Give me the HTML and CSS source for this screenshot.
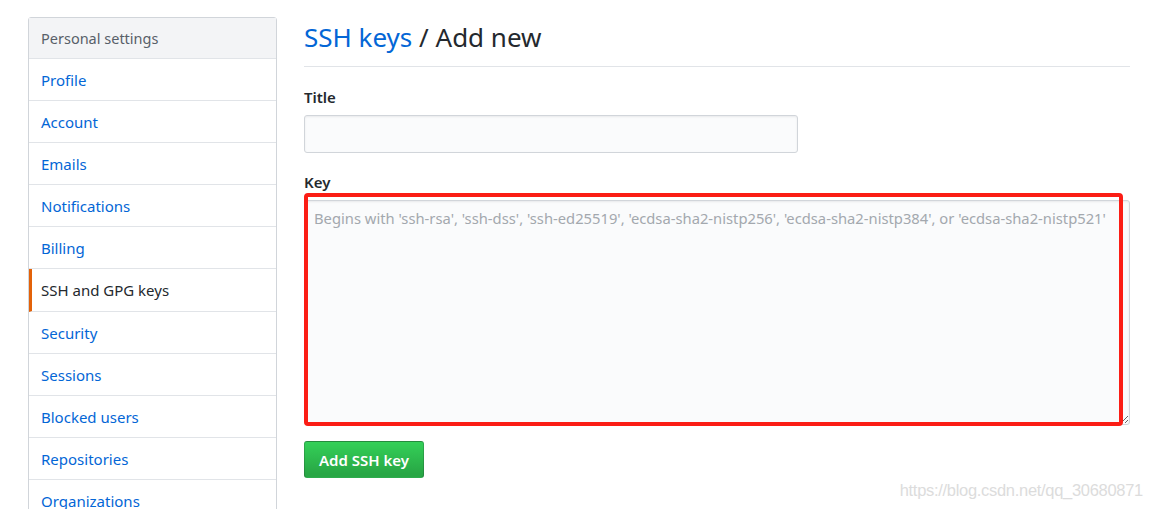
FILE: index.html
```html
<!DOCTYPE html>
<html lang="en">
<head>
  <meta charset="UTF-8" />
  <title>SSH keys / Add new</title>
  <link rel="stylesheet" href="styles.css">
</head>
<body>

<div class="page">
  <nav class="menu">
    <div class="menu-heading">Personal settings</div>
    <a class="menu-item" href="#">Profile</a>
    <a class="menu-item" href="#">Account</a>
    <a class="menu-item" href="#">Emails</a>
    <a class="menu-item" href="#">Notifications</a>
    <a class="menu-item" href="#">Billing</a>
    <a class="menu-item selected" href="#">SSH and GPG keys</a>
    <a class="menu-item" href="#">Security</a>
    <a class="menu-item" href="#">Sessions</a>
    <a class="menu-item" href="#">Blocked users</a>
    <a class="menu-item" href="#">Repositories</a>
    <a class="menu-item" href="#">Organizations</a>
  </nav>

  <main class="main">
    <div class="subhead">
      <h2><a href="#">SSH keys</a> / Add new</h2>
    </div>

    <form>
      <label class="field-label" for="title">Title</label>
      <input class="form-control title-input" type="text" id="title" />

      <label class="field-label key-label" for="key">Key</label>
      <div class="key-wrap">
        <textarea class="form-control key-input" id="key" placeholder="Begins with 'ssh-rsa', 'ssh-dss', 'ssh-ed25519', 'ecdsa-sha2-nistp256', 'ecdsa-sha2-nistp384', or 'ecdsa-sha2-nistp521'"></textarea>
        <div class="highlight"></div>
      </div>

      <button class="btn-primary" type="button">Add SSH key</button>
    </form>
  </main>
</div>

<div class="watermark">https://blog.csdn.net/qq_30680871</div>

</body>
</html>
```

FILE: styles.css
```css
body {
  margin: 0;
  font-family: 'Noto Sans', sans-serif;
  background: #fff;
  color: #24292e;
  overflow: hidden;
}

a {
  color: #0366d6;
  text-decoration: none;
}

.page {
  display: flex;
  gap: 27px;
  padding: 17px 21px 0 28px;
}

.menu {
  width: 249px;
  flex-shrink: 0;
  display: flex;
  flex-direction: column;
  border: 1px solid #d1d5da;
  border-radius: 3px;
  box-sizing: border-box;
}

.menu-heading {
  padding: 8px 12px;
  line-height: 24px;
  font-size: 14.5px;
  color: #586069;
  background: #f3f4f6;
  border-bottom: 1px solid #e1e4e8;
}

.menu-item {
  padding: 9px 12px 8px;
  line-height: 24.1px;
  font-size: 15px;
  border-bottom: 1px solid #e1e4e8;
}

.menu-item.selected {
  color: #24292e;
  padding-left: 9px;
  border-left: 3px solid #e36209;
}

.main {
  flex: 1;
}

.subhead {
  padding-bottom: 8px;
  border-bottom: 1px solid #e1e4e8;
}

.subhead h2 {
  margin: 0;
  font-size: 26px;
  font-weight: 400;
  line-height: 41px;
}

form {
  display: flex;
  flex-direction: column;
  align-items: flex-start;
  padding-top: 18px;
}

.field-label {
  font-size: 15px;
  font-weight: 600;
  line-height: 24px;
  margin-bottom: 6px;
}

.key-label {
  margin-top: 17px;
}

.form-control {
  box-sizing: border-box;
  font-family: inherit;
  font-size: 15px;
  background: #fafbfc;
  border: 1px solid #d1d5da;
  border-radius: 3px;
  box-shadow: inset 0 1px 2px rgba(27, 31, 35, 0.075);
  color: #24292e;
}

.title-input {
  width: 494px;
  height: 38px;
  padding: 6px 9px;
}

.key-wrap {
  position: relative;
  width: 826px;
}

.key-input {
  display: block;
  width: 826px;
  height: 225px;
  padding: 7px 9px;
  font-size: 14.75px;
  line-height: 20px;
  resize: vertical;
}

.key-input::placeholder {
  color: #a3a8ae;
}

.highlight {
  position: absolute;
  left: 0;
  top: -7px;
  width: 819px;
  height: 233px;
  box-sizing: border-box;
  border: 4px solid #fb1d15;
  border-radius: 4px;
  pointer-events: none;
}

.btn-primary {
  margin-top: 16px;
  height: 37px;
  padding: 0 14px;
  font-family: inherit;
  font-size: 15px;
  font-weight: 600;
  color: #fff;
  background: linear-gradient(#34d058, #28a745 90%);
  border: 1px solid rgba(27, 31, 35, 0.2);
  border-radius: 3px;
  cursor: pointer;
}

.watermark {
  position: absolute;
  right: 8px;
  bottom: 9px;
  font-family: 'Liberation Sans', sans-serif;
  font-size: 16.5px;
  color: #dcdcdc;
  letter-spacing: -0.3px;
}
```
